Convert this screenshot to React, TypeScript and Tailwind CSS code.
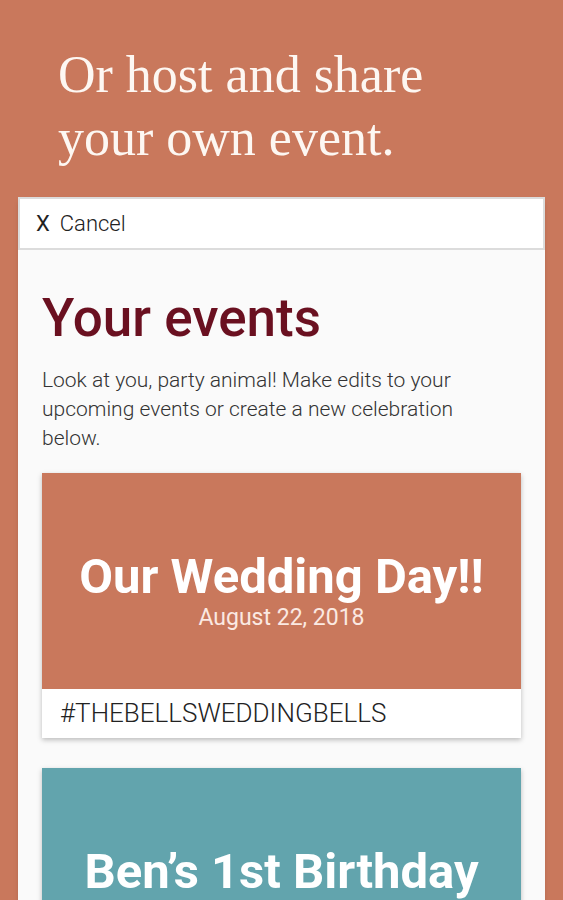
const events = [
  { title: "Our Wedding Day!!", date: "August 22, 2018", tag: "#THEBELLSWEDDINGBELLS", color: "bg-[#c9785c]" },
  { title: "Ben’s 1st Birthday", date: "", tag: "", color: "bg-[#62a4ad]" },
]

export default function App() {
  return (
    <div className="h-[900px] w-[563px] overflow-hidden bg-[#c9785c] font-['Roboto',sans-serif]">
      <h1 className="px-[58px] pt-[43px] pb-[28px] font-['Liberation_Serif',serif] text-[52px] leading-[63px] text-[#fdf7f2]">
        Or host and share
        <br />
        your own event.
      </h1>

      <div className="mx-[18px] bg-[#fafafa] shadow-md">
        <div className="flex h-[53px] items-center gap-[10px] border-2 border-[#dcdcdc] bg-white px-[16px] text-[22px] text-[#222]">
          <span className="font-normal">X</span>
          <span className="font-light">Cancel</span>
        </div>

        <div className="px-[24px] pt-[38px] pb-[40px]">
          <h2 className="text-[53px] font-medium leading-[60px] text-[#6a1020]">Your events</h2>
          <p className="mt-[18px] max-w-[460px] text-[21px] font-light leading-[29px] text-[#333]">
            Look at you, party animal! Make edits to your upcoming events or create a new celebration below.
          </p>

          <div className="mt-[20px] flex flex-col gap-[30px]">
            {events.map((ev) => (
              <div key={ev.title} className="shadow-[0_2px_5px_rgba(0,0,0,0.25)]">
                <div className={`${ev.color} flex h-[216px] flex-col items-center pt-[78px] text-white`}>
                  <div className="text-[49px] font-bold leading-[52px]">{ev.title}</div>
                  {ev.date && <div className="mt-[1px] text-[23px] leading-[28px] text-[#fbe9e2]">{ev.date}</div>}
                </div>
                {ev.tag && (
                  <div className="flex h-[49px] items-center bg-white px-[18px] text-[26px] font-light text-[#222]">
                    {ev.tag}
                  </div>
                )}
              </div>
            ))}
          </div>
        </div>
      </div>
    </div>
  )
}
